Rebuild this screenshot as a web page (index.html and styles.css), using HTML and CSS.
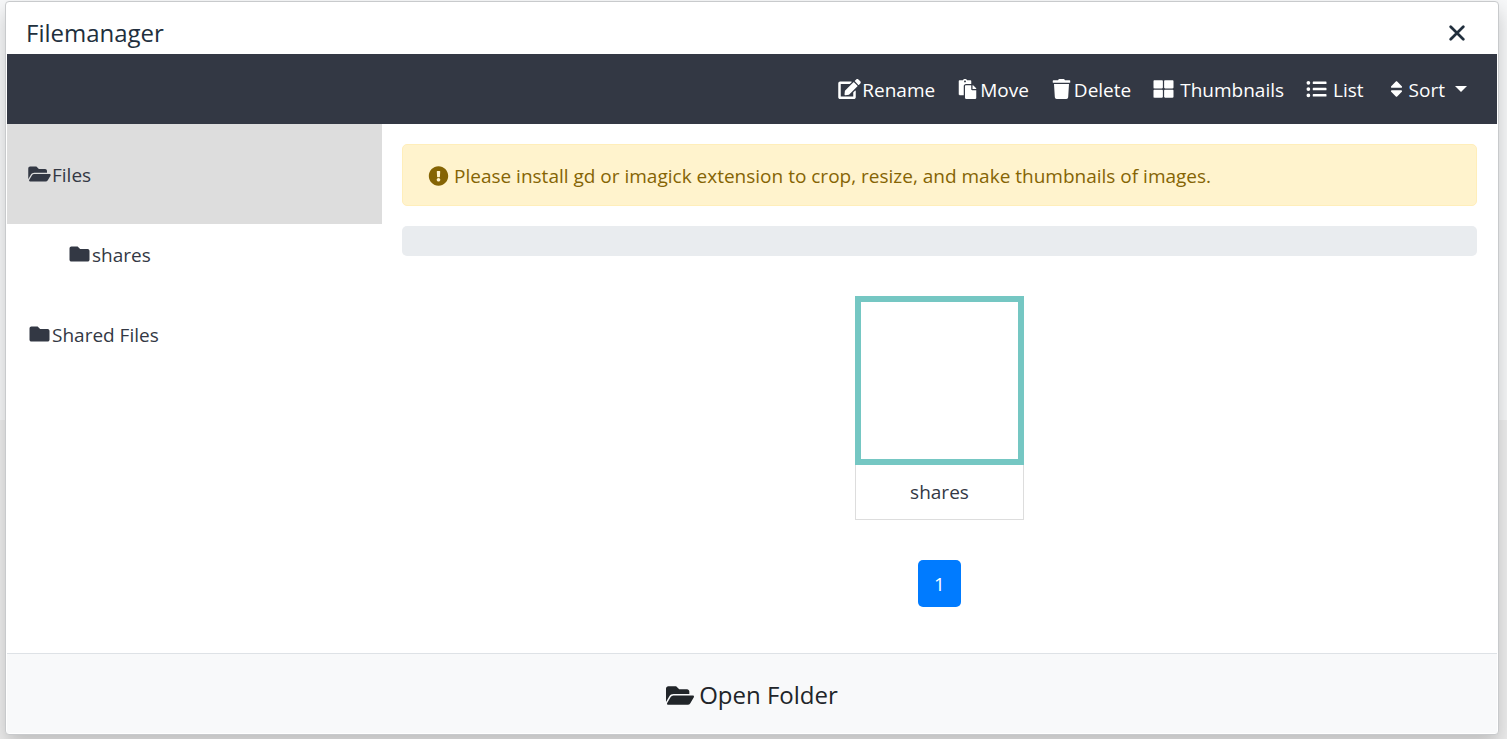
FILE: index.html
```html
<!DOCTYPE html>
<html lang="en">
<head>
<meta charset="utf-8">
<meta name="viewport" content="width=device-width, initial-scale=1">
<title>Filemanager</title>
<link rel="stylesheet" href="styles.css">
</head>
<body>
<svg class="sprite" aria-hidden="true">
  <symbol id="edit" viewBox="0 0 576 512"><path d="M402.600 83.200l90.200 90.200c3.800 3.800 3.800 10 0 13.800L274.400 405.600l-92.800 10.300c-12.400 1.400-22.900-9.100-21.500-21.500l10.300-92.800L388.800 83.200c3.800-3.800 10-3.800 13.800 0zm162-22.900l-48.800-48.800c-15.200-15.200-39.900-15.200-55.200 0l-35.400 35.400c-3.800 3.800-3.800 10 0 13.800l90.200 90.200c3.800 3.800 10 3.800 13.800 0l35.400-35.400c15.200-15.300 15.200-40 0-55.200zM384 346.200V448H64V128h229.800c3.200 0 6.200-1.300 8.500-3.500l40-40c7.600-7.600 2.200-20.500-8.500-20.500H48C21.500 64 0 85.500 0 112v352c0 26.500 21.500 48 48 48h352c26.500 0 48-21.500 48-48V306.200c0-10.700-12.900-16-20.500-8.500l-40 40c-2.200 2.300-3.500 5.300-3.500 8.500z"/></symbol>
  <symbol id="paste" viewBox="0 0 448 512"><path d="M128 184c0-30.879 25.122-56 56-56h136V56c0-13.255-10.745-24-24-24h-80.610C204.306 12.890 183.637 0 160 0s-44.306 12.890-55.390 32H24C10.745 32 0 42.745 0 56v336c0 13.255 10.745 24 24 24h104V184zm32-144c13.255 0 24 10.745 24 24s-10.745 24-24 24-24-10.745-24-24 10.745-24 24-24zm184 248h104v200c0 13.255-10.745 24-24 24H184c-13.255 0-24-10.745-24-24V184c0-13.255 10.745-24 24-24h136v104c0 13.200 10.800 24 24 24zm104-38.059V256h-96v-96h6.059a24 24 0 0 1 16.970 7.029l65.941 65.941a24.002 24.002 0 0 1 7.030 16.971z"/></symbol>
  <symbol id="trash" viewBox="0 0 448 512"><path d="M432 32H312l-9.400-18.700A24 24 0 0 0 281.100 0H166.800a23.720 23.720 0 0 0-21.400 13.300L136 32H16A16 16 0 0 0 0 48v32a16 16 0 0 0 16 16h416a16 16 0 0 0 16-16V48a16 16 0 0 0-16-16zM53.200 467a48 48 0 0 0 47.900 45h245.800a48 48 0 0 0 47.900-45L416 128H32z"/></symbol>
  <symbol id="thumbs" viewBox="0 0 512 512"><path d="M296 32h192c13.255 0 24 10.745 24 24v160c0 13.255-10.745 24-24 24H296c-13.255 0-24-10.745-24-24V56c0-13.255 10.745-24 24-24zm-80 0H24C10.745 32 0 42.745 0 56v160c0 13.255 10.745 24 24 24h192c13.255 0 24-10.745 24-24V56c0-13.255-10.745-24-24-24zM0 296v160c0 13.255 10.745 24 24 24h192c13.255 0 24-10.745 24-24V296c0-13.255-10.745-24-24-24H24c-13.255 0-24 10.745-24 24zm296 184h192c13.255 0 24-10.745 24-24V296c0-13.255-10.745-24-24-24H296c-13.255 0-24 10.745-24 24v160c0 13.255 10.745 24 24 24z"/></symbol>
  <symbol id="list" viewBox="0 0 512 512"><path d="M48 48a48 48 0 1 0 48 48 48 48 0 0 0-48-48zm0 160a48 48 0 1 0 48 48 48 48 0 0 0-48-48zm0 160a48 48 0 1 0 48 48 48 48 0 0 0-48-48zm448 16H176a16 16 0 0 0-16 16v32a16 16 0 0 0 16 16h320a16 16 0 0 0 16-16v-32a16 16 0 0 0-16-16zm0-320H176a16 16 0 0 0-16 16v32a16 16 0 0 0 16 16h320a16 16 0 0 0 16-16V80a16 16 0 0 0-16-16zm0 160H176a16 16 0 0 0-16 16v32a16 16 0 0 0 16 16h320a16 16 0 0 0 16-16v-32a16 16 0 0 0-16-16z"/></symbol>
  <symbol id="sort" viewBox="0 0 320 512"><path d="M41 288h238c21.400 0 32.100 25.900 17 41L177 448c-9.400 9.400-24.600 9.400-33.900 0L24 329c-15.100-15.100-4.400-41 17-41zm255-105L177 64c-9.400-9.400-24.600-9.400-33.900 0L24 183c-15.100 15.100-4.400 41 17 41h238c21.400 0 32.100-25.900 17-41z"/></symbol>
  <symbol id="folder" viewBox="0 0 512 512"><path d="M464 128H272l-64-64H48C21.490 64 0 85.490 0 112v288c0 26.510 21.490 48 48 48h416c26.510 0 48-21.490 48-48V176c0-26.510-21.490-48-48-48z"/></symbol>
  <symbol id="folder-open" viewBox="0 0 576 512"><path d="M572.694 292.093L500.270 416.248A63.997 63.997 0 0 1 444.989 448H45.025c-18.523 0-30.064-20.093-20.731-36.093l72.424-124.155A64 64 0 0 1 152 256h399.964c18.523 0 30.064 20.093 20.730 36.093zM152 224h328v-48c0-26.510-21.490-48-48-48H272l-64-64H48C21.490 64 0 85.490 0 112v278.046l69.077-118.418C86.214 242.250 117.989 224 152 224z"/></symbol>
  <symbol id="alert" viewBox="0 0 512 512"><path d="M504 256c0 136.997-111.043 248-248 248S8 392.997 8 256C8 119.083 119.043 8 256 8s248 111.083 248 248zm-248 50c-25.405 0-46 20.595-46 46s20.595 46 46 46 46-20.595 46-46-20.595-46-46-46zm-43.673-165.346l7.418 136c.347 6.364 5.609 11.346 11.982 11.346h48.546c6.373 0 11.635-4.982 11.982-11.346l7.418-136c.375-6.874-5.098-12.654-11.982-12.654h-63.383c-6.884 0-12.356 5.780-11.981 12.654z"/></symbol>
</svg>
<div class="dialog" role="dialog" aria-labelledby="dialog-title">
  <header class="titlebar">
    <h1 class="title" id="dialog-title">Filemanager</h1>
    <button class="close" type="button" aria-label="Close">
      <svg class="close-icon" viewBox="0 0 14 14"><path d="M1.500 1.500l11 11m0-11l-11 11"/></svg>
    </button>
  </header>
  <nav class="toolbar">
    <button class="tool" type="button"><svg class="icon"><use href="#edit"/></svg>Rename</button>
    <button class="tool" type="button"><svg class="icon"><use href="#paste"/></svg>Move</button>
    <button class="tool" type="button"><svg class="icon"><use href="#trash"/></svg>Delete</button>
    <button class="tool spaced" type="button"><svg class="icon"><use href="#thumbs"/></svg>Thumbnails</button>
    <button class="tool spaced" type="button"><svg class="icon"><use href="#list"/></svg>List</button>
    <button class="tool" type="button"><svg class="icon"><use href="#sort"/></svg>Sort<span class="caret"></span></button>
  </nav>
  <div class="content">
    <aside class="sidebar">
      <a class="folder active" href="#"><svg class="icon"><use href="#folder-open"/></svg>Files</a>
      <a class="folder child" href="#"><svg class="icon"><use href="#folder"/></svg>shares</a>
      <a class="folder" href="#"><svg class="icon"><use href="#folder"/></svg>Shared Files</a>
    </aside>
    <main class="main">
      <div class="notice" role="alert"><svg class="icon"><use href="#alert"/></svg>Please install gd or imagick extension to crop, resize, and make thumbnails of images.</div>
      <div class="path"></div>
      <div class="grid">
        <a class="card" href="#">
          <span class="preview"></span>
          <span class="name">shares</span>
        </a>
      </div>
      <a class="page" href="#" aria-current="page">1</a>
    </main>
  </div>
  <footer class="footer">
    <button class="open" type="button"><svg class="icon"><use href="#folder-open"/></svg>Open Folder</button>
  </footer>
</div>
</body>
</html>
```
FILE: styles.css
```css
* { box-sizing: border-box; }
body {
  display: flex;
  min-height: 100vh;
  margin: 0;
  padding: 1px 8px 4px 5px;
  background: linear-gradient(#f7f8f9 0 420px, #eeeeee 420px);
  color: #333844;
  font: 19px/30px "Open Sans", "Noto Sans", sans-serif;
}
a { color: inherit; text-decoration: none; }
button {
  padding: 0;
  border: 0;
  background: none;
  color: inherit;
  font: inherit;
  cursor: pointer;
}
.sprite { position: absolute; width: 0; height: 0; }
.icon { flex: none; width: 25px; height: 20px; fill: currentColor; }
.tool .icon, .folder .icon { margin-bottom: 2px; }
.dialog {
  display: flex;
  flex: 1;
  flex-direction: column;
  padding: 1px;
  border: 1px solid #c8cacc;
  border-radius: 4px;
  background: #fff;
  box-shadow: 0 10px 20px rgba(0, 0, 0, 0.2);
}
.titlebar {
  display: flex;
  align-items: center;
  justify-content: space-between;
  height: 51px;
  padding: 9px 32px 0 19px;
  color: #212f3d;
}
.title { margin: 0; font-size: 24px; font-weight: 400; }
.close { display: flex; padding: 0; }
.close-icon {
  width: 16px;
  height: 16px;
  fill: none;
  stroke: currentColor;
  stroke-width: 2.400;
  stroke-linecap: round;
}
.toolbar {
  display: flex;
  justify-content: flex-end;
  gap: 20px;
  padding: 21px 30px 19px;
  background: #333844;
  color: #fff;
}
.tool { display: flex; align-items: center; }
.spaced { gap: 4px; }
.caret {
  margin: 0 0 2px 10px;
  border: 6px solid transparent;
  border-top-color: currentColor;
  border-bottom: 0;
}
.content { display: flex; flex: 1; }
.sidebar { flex: none; width: 375px; }
.folder { display: flex; align-items: center; padding: 36px 20px 34px; }
.active { background: #ddd; }
.child { padding: 16px 60px 14px; }
.main {
  display: flex;
  flex: 1;
  flex-direction: column;
  align-items: center;
  padding: 20px;
}
.notice {
  display: flex;
  align-items: center;
  align-self: stretch;
  gap: 3px;
  padding: 16px 23px 14px;
  border: 1px solid #ffeeba;
  border-radius: 5px;
  background: #fff3cd;
  color: #856404;
}
.path {
  align-self: stretch;
  height: 30px;
  margin-top: 20px;
  border-radius: 5px;
  background: #e9ecef;
}
.grid { margin: 40px 0; }
.card { display: flex; flex-direction: column; width: 169px; }
.preview { height: 169px; border: 6px solid #75c7c3; }
.name {
  padding: 12px;
  border: 1px solid #ddd;
  border-top: 0;
  text-align: center;
}
.page {
  padding: 9px 16px 8px;
  border-radius: 5px;
  background: #007bff;
  color: #fff;
}
.footer {
  display: flex;
  justify-content: center;
  padding: 26px 24px 23px;
  border-top: 1px solid #dee2e6;
  background: #f8f9fa;
  color: #212529;
}
.open { display: flex; align-items: center; gap: 5px; font-size: 24px; }
.open .icon { width: 28px; height: 25px; }
```
